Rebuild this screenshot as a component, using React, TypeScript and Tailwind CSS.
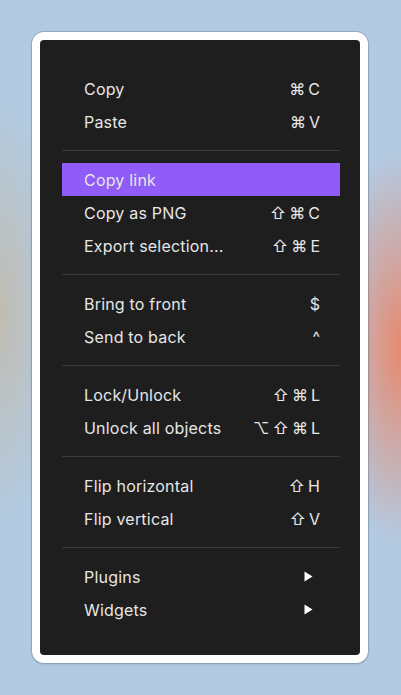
import { Fragment } from "react";

type Item = { label: string; keys?: string; submenu?: boolean; active?: boolean };

const groups: Item[][] = [
  [
    { label: "Copy", keys: "⌘C" },
    { label: "Paste", keys: "⌘V" },
  ],
  [
    { label: "Copy link", active: true },
    { label: "Copy as PNG", keys: "⇧⌘C" },
    { label: "Export selection...", keys: "⇧⌘E" },
  ],
  [
    { label: "Bring to front", keys: "$" },
    { label: "Send to back", keys: "^" },
  ],
  [
    { label: "Lock/Unlock", keys: "⇧⌘L" },
    { label: "Unlock all objects", keys: "⌥⇧⌘L" },
  ],
  [
    { label: "Flip horizontal", keys: "⇧H" },
    { label: "Flip vertical", keys: "⇧V" },
  ],
  [
    { label: "Plugins", submenu: true },
    { label: "Widgets", submenu: true },
  ],
];

function Caret() {
  return (
    <svg width="9" height="11" viewBox="0 0 9 11" className="mr-[7px]">
      <path d="M0.5 0.5 L8.5 5.5 L0.5 10.5 Z" fill="#ffffff" />
    </svg>
  );
}

function Row({ item }: { item: Item }) {
  return (
    <div
      className={`flex h-[33px] items-center justify-between pl-[22px] pr-[20px] ${
        item.active ? "bg-[#8f5cf7]" : ""
      }`}
    >
      <span className="text-[16px] tracking-[0.2px] text-[#e6e6e6]">{item.label}</span>
      {item.keys && (
        <span className="flex gap-[3px] text-[16px] text-[#e6e6e6]">
          {item.keys.split("").map((k, i) => (
            <span key={i}>{k}</span>
          ))}
        </span>
      )}
      {item.submenu && <Caret />}
    </div>
  );
}

export default function App() {
  return (
    <div className="min-h-screen w-full bg-[#b2cbe3] bg-[radial-gradient(ellipse_75px_200px_at_100%_50%,rgba(234,134,104,0.95),transparent),radial-gradient(ellipse_60px_220px_at_0%_45%,rgba(196,184,164,0.8),transparent)] pt-8 font-['Inter','DejaVu_Sans',sans-serif]">
      <div className="ml-8 w-[336px] rounded-xl bg-white p-2 shadow-[0_0_0_1px_rgba(70,90,110,0.25),0_1px_3px_rgba(0,0,0,0.15)]">
        <div className="rounded bg-[#1e1e1e] pl-[22px] pr-[20px] pt-8 pb-[29px]">
          {groups.map((g, gi) => (
            <Fragment key={gi}>
              {gi > 0 && <div className="my-3 h-px bg-[#3a3a3a]" />}
              {g.map((item) => (
                <Row key={item.label} item={item} />
              ))}
            </Fragment>
          ))}
        </div>
      </div>
    </div>
  );
}
